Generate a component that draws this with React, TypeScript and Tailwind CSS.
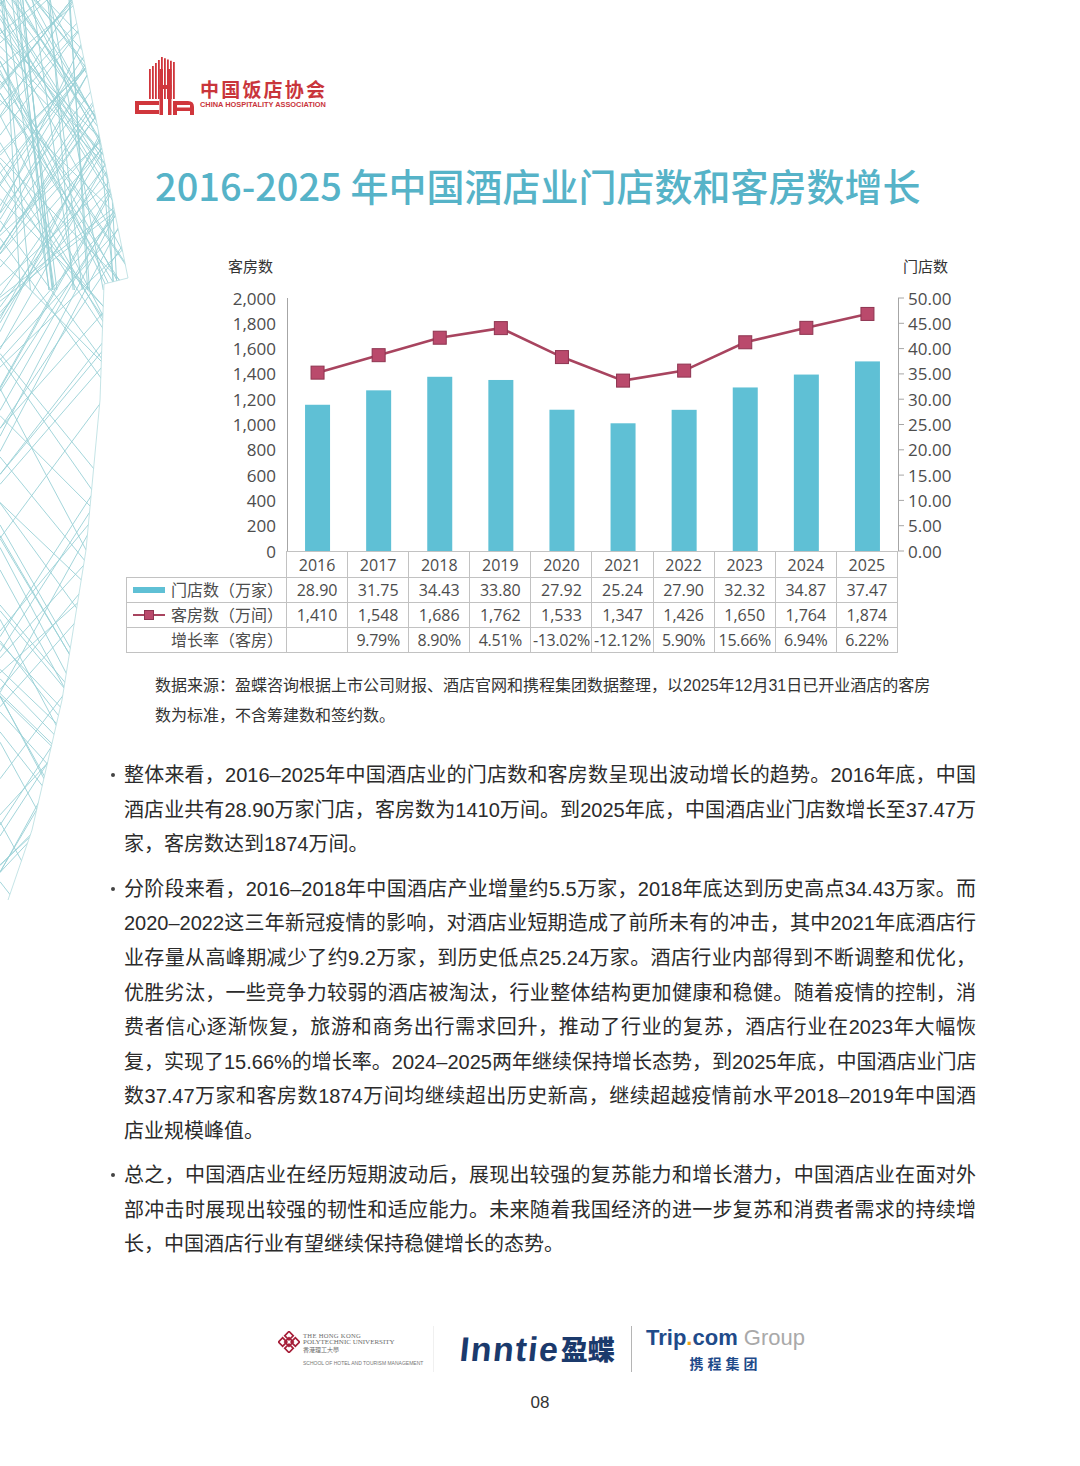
import React from "react";

const years = [2016, 2017, 2018, 2019, 2020, 2021, 2022, 2023, 2024, 2025];
const stores = [28.9, 31.75, 34.43, 33.8, 27.92, 25.24, 27.9, 32.32, 34.87, 37.47];
const rooms = [1410, 1548, 1686, 1762, 1533, 1347, 1426, 1650, 1764, 1874];
const growth = ["", "9.79%", "8.90%", "4.51%", "-13.02%", "-12.12%", "5.90%", "15.66%", "6.94%", "6.22%"];

const X0 = 287;
const COLW = 61.1;
const YB = 551;
const YT = 298;
const H = YB - YT;

function rng(seed: number) {
  let s = seed;
  return () => {
    s = (s * 16807) % 2147483647;
    return (s - 1) / 2147483646;
  };
}

const decoLines: number[][] = (() => {
  const r = rng(24681);
  const out: number[][] = [];
  for (let i = 0; i < 60; i++) {
    const y0 = -250 + r() * 1250;
    const s = 0.9 + r() * 1.0;
    out.push([0, y0, 140, y0 + 140 * s]);
  }
  for (let i = 0; i < 60; i++) {
    const y0 = -50 + r() * 1250;
    const s = -(0.9 + r() * 1.0);
    out.push([0, y0, 140, y0 + 140 * s]);
  }
  for (let i = 0; i < 30; i++) {
    const y0 = -250 + r() * 500;
    const s = 0.7 + r() * 1.4;
    out.push([0, y0, 140, y0 + 140 * s]);
  }
  for (let i = 0; i < 30; i++) {
    const y0 = 0 + r() * 500;
    const s = -(0.7 + r() * 1.4);
    out.push([0, y0, 140, y0 + 140 * s]);
  }
  for (let i = 0; i < 22; i++) {
    const x0 = r() * 110;
    const dx = 15 + r() * 40;
    out.push([x0, -10, x0 + dx, 290]);
  }
  return out;
})();

const envelope = "0,0 72,0 128,278 104,284 100,400 86,550 62,700 32,830 8,900 0,900";

function Deco() {
  return (
    <svg className="absolute left-0 top-0" width="140" height="900" viewBox="0 0 140 900">
      <defs>
        <clipPath id="envclip">
          <polygon points={envelope} />
        </clipPath>
      </defs>
      <g clipPath="url(#envclip)" stroke="#98d0d6" strokeWidth="0.9" fill="none">
        {decoLines.map((l, i) => (
          <line key={i} x1={l[0]} y1={l[1]} x2={l[2]} y2={l[3]} />
        ))}
      </g>
      <polyline points="72,0 128,278 104,284 100,400 86,550 62,700 32,830 8,900" stroke="#b6dde0" strokeWidth="0.8" fill="none" />
    </svg>
  );
}

function LogoMark() {
  const stripes = [0, 1, 2, 3, 4, 5, 6, 7, 8];
  const topAt = (x: number) => (x <= 28 ? 14 - ((x - 16) / 12) * 12 : 2 + ((x - 28) / 12) * 5);
  return (
    <svg width="66" height="60" viewBox="0 0 66 60">
      <g fill="#d0363c">
        {stripes.map((i) => {
          const x = 16 + i * 3;
          const t = topAt(x);
          return <rect key={i} x={x} y={t} width="1.8" height={44 - t} />;
        })}
        <rect x="26.5" y="14" width="3.5" height="46" />
        <rect x="35" y="14" width="3.5" height="46" />
        <rect x="26.5" y="30" width="12" height="4" />
        <path fillRule="evenodd" d="M2 46 L26 46 L26 50 L6 50 L6 55 L26 55 L26 59 L2 59 Z" />
        <path
          fillRule="evenodd"
          d="M40 60 L40 46 L55 46 Q61 46 61 52 L61 60 L57 60 L57 56 L44 56 L44 60 Z M44 50 L57 50 L57 52.5 L44 52.5 Z"
        />
      </g>
    </svg>
  );
}

function Chart() {
  const yl = (v: number) => YB - (v / 2000) * H;
  const yr = (v: number) => YB - (v / 50) * H;
  const cx = (i: number) => X0 + COLW * (i + 0.5);
  const pts = rooms.map((v, i) => `${cx(i)},${yl(v)}`).join(" ");
  return (
    <svg width="1080" height="296" viewBox="0 255 1080 296" className="block overflow-visible">
      <g fontFamily="'Noto Sans CJK SC', sans-serif" fontSize="15" fill="#333">
        <text x="228" y="272">客房数</text>
        <text x="903" y="272">门店数</text>
      </g>
      <g fontFamily="'Open Sans', sans-serif" fontSize="17" fill="#4d4d4d">
        {Array.from({ length: 11 }).map((_, i) => {
          const v = 2000 - i * 200;
          const y = YT + (H / 10) * i;
          return (
            <text key={"l" + i} x="276" y={y} textAnchor="end" dominantBaseline="central">
              {v.toLocaleString("en-US")}
            </text>
          );
        })}
        {Array.from({ length: 11 }).map((_, i) => {
          const v = 50 - i * 5;
          const y = YT + (H / 10) * i;
          return (
            <text key={"r" + i} x="908" y={y} dominantBaseline="central">
              {v.toFixed(2)}
            </text>
          );
        })}
      </g>
      <line x1="287.5" y1={YT} x2="287.5" y2={YB} stroke="#a6a6a6" strokeWidth="1" />
      <line x1="898.5" y1={YT} x2="898.5" y2={YB} stroke="#a6a6a6" strokeWidth="1" />
      {Array.from({ length: 11 }).map((_, i) => {
        const y = YT + (H / 10) * i;
        return <line key={"t" + i} x1="898" y1={y} x2="904" y2={y} stroke="#a6a6a6" strokeWidth="1" />;
      })}
      {stores.map((v, i) => (
        <rect key={"b" + i} x={cx(i) - 12.5} y={yr(v)} width="25" height={YB - yr(v)} fill="#5fc0d5" />
      ))}
      <polyline points={pts} fill="none" stroke="#a8445f" strokeWidth="2.6" />
      {rooms.map((v, i) => (
        <rect
          key={"m" + i}
          x={cx(i) - 6.5}
          y={yl(v) - 6.5}
          width="13"
          height="13"
          fill="#ba4a6c"
          stroke="#8e3450"
          strokeWidth="1"
        />
      ))}
    </svg>
  );
}

function DataTable() {
  return (
    <div className="ml-[126px] grid grid-cols-[161px_repeat(10,61.1px)] font-['Open_Sans','Noto_Sans_CJK_SC',sans-serif] text-[16px] text-[#4d4d4d]">
      <div className="h-[27px] border-r border-b border-[#c2c2c2]"></div>
      {years.map((y) => (
        <div key={y} className="h-[27px] flex items-center justify-center border-t border-r border-b border-[#c2c2c2]">
          {y}
        </div>
      ))}

      <div className="h-[25px] flex items-center border-l border-r border-b border-[#c2c2c2] pl-[6px] pr-[3px]">
        <div className="w-[32px] h-[6px] bg-[#5fc0d5]"></div>
        <div className="ml-auto text-[16px] leading-none">门店数（万家）</div>
      </div>
      {stores.map((v, i) => (
        <div key={"s" + i} className="h-[25px] flex items-center justify-center border-r border-b border-[#c2c2c2]">
          {v.toFixed(2)}
        </div>
      ))}

      <div className="h-[25px] flex items-center border-l border-r border-b border-[#c2c2c2] pl-[6px] pr-[3px]">
        <div className="relative w-[32px] h-[10px] flex items-center">
          <div className="w-full h-[2px] bg-[#a8445f]"></div>
          <div className="absolute left-[11px] top-0 w-[10px] h-[10px] bg-[#ba4a6c] border border-[#8e3450]"></div>
        </div>
        <div className="ml-auto text-[16px] leading-none">客房数（万间）</div>
      </div>
      {rooms.map((v, i) => (
        <div key={"r" + i} className="h-[25px] flex items-center justify-center border-r border-b border-[#c2c2c2]">
          {v.toLocaleString("en-US")}
        </div>
      ))}

      <div className="h-[25px] flex items-center justify-end border-l border-r border-b border-[#c2c2c2] pr-[3px]">
        <div className="text-[16px] leading-none">增长率（客房）</div>
      </div>
      {growth.map((v, i) => (
        <div key={"g" + i} className="h-[25px] flex items-center justify-center border-r border-b border-[#c2c2c2] whitespace-nowrap tracking-[-0.3px]">
          {v}
        </div>
      ))}
    </div>
  );
}

const paras: string[][] = [
  [
    "整体来看，2016–2025年中国酒店业的门店数和客房数呈现出波动增长的趋势。2016年底，中国",
    "酒店业共有28.90万家门店，客房数为1410万间。到2025年底，中国酒店业门店数增长至37.47万",
    "家，客房数达到1874万间。",
  ],
  [
    "分阶段来看，2016–2018年中国酒店产业增量约5.5万家，2018年底达到历史高点34.43万家。而",
    "2020–2022这三年新冠疫情的影响，对酒店业短期造成了前所未有的冲击，其中2021年底酒店行",
    "业存量从高峰期减少了约9.2万家，到历史低点25.24万家。酒店行业内部得到不断调整和优化，",
    "优胜劣汰，一些竞争力较弱的酒店被淘汰，行业整体结构更加健康和稳健。随着疫情的控制，消",
    "费者信心逐渐恢复，旅游和商务出行需求回升，推动了行业的复苏，酒店行业在2023年大幅恢",
    "复，实现了15.66%的增长率。2024–2025两年继续保持增长态势，到2025年底，中国酒店业门店",
    "数37.47万家和客房数1874万间均继续超出历史新高，继续超越疫情前水平2018–2019年中国酒",
    "店业规模峰值。",
  ],
  [
    "总之，中国酒店业在经历短期波动后，展现出较强的复苏能力和增长潜力，中国酒店业在面对外",
    "部冲击时展现出较强的韧性和适应能力。未来随着我国经济的进一步复苏和消费者需求的持续增",
    "长，中国酒店行业有望继续保持稳健增长的态势。",
  ],
];

function PolyUMark() {
  return (
    <svg width="22" height="22" viewBox="0 0 22 22">
      <g transform="rotate(45 11 11)" fill="none" stroke="#a61e38" strokeWidth="1.7">
        <rect x="3.5" y="3.5" width="6" height="6" />
        <rect x="12.5" y="3.5" width="6" height="6" />
        <rect x="3.5" y="12.5" width="6" height="6" />
        <rect x="12.5" y="12.5" width="6" height="6" />
        <rect x="8" y="8" width="6" height="6" />
      </g>
    </svg>
  );
}

export default function App() {
  return (
    <div className="relative w-[1080px] h-[1466px] bg-white overflow-hidden font-['Liberation_Sans','Noto_Sans_CJK_SC',sans-serif] [text-autospace:no-autospace]">
      <Deco />
      <div className="relative">
        {/* Logo */}
        <div className="pt-[55px] pl-[133px] flex items-start h-[116px]">
          <LogoMark />
          <div className="ml-[1px] pt-[23px] flex flex-col">
            <div className="font-['Noto_Sans_CJK_SC',sans-serif] text-[19px] leading-[21px] font-bold tracking-[2.2px] text-[#c9353b]">
              中国饭店协会
            </div>
            <div className="mt-[2px] text-[7.4px] leading-[8px] font-bold text-[#c9353b] whitespace-nowrap">
              CHINA HOSPITALITY ASSOCIATION
            </div>
          </div>
        </div>

        {/* Title */}
        <div className="mt-[44px] h-[50px] pl-[155px] font-['Noto_Sans_CJK_SC',sans-serif] text-[38px] leading-[50px] font-medium text-[#56b3c8] whitespace-nowrap">
          2016-2025 年中国酒店业门店数和客房数增长
        </div>

        {/* Chart */}
        <div className="mt-[45px]">
          <Chart />
        </div>
        <DataTable />

        {/* Note */}
        <div className="mt-[18px] pl-[155px] text-[16px] leading-[30px] text-[#333]">
          <div className="whitespace-nowrap">
            数据来源：盈蝶咨询根据上市公司财报、酒店官网和携程集团数据整理，以2025年12月31日已开业酒店的客房
          </div>
          <div className="whitespace-nowrap">数为标准，不含筹建数和签约数。</div>
        </div>

        {/* Body */}
        <div className="mt-[27px] pl-[110px] flex flex-col text-[20px] leading-[34.6px] text-[#2b2b2b]">
          {paras.map((lines, pi) => (
            <div key={pi} className={pi === 0 ? "flex" : pi === 1 ? "flex mt-[10px]" : "flex mt-[9.5px]"}>
              <div className="w-[14px] shrink-0 h-[34.6px] flex items-center">
                <div className="w-[4px] h-[4px] rounded-full bg-[#444] ml-[1px]"></div>
              </div>
              <div className="w-[852px]">
                {lines.map((ln, li) => (
                  <div
                    key={li}
                    className={
                      li < lines.length - 1
                        ? "whitespace-nowrap text-justify [text-align-last:justify]"
                        : "whitespace-nowrap"
                    }
                  >
                    {ln}
                  </div>
                ))}
              </div>
            </div>
          ))}
        </div>

        {/* Footer logos */}
        <div className="mt-[63px] h-[48px] pl-[278px] flex items-center">
          <div className="w-[150px] shrink-0 flex flex-col">
            <div className="flex items-start">
              <PolyUMark />
              <div className="ml-[3px] mt-[1px] flex flex-col font-['Liberation_Serif',serif] text-[#6b6b6b]">
                <div className="text-[6.6px] leading-[7px] tracking-[0.3px]">THE HONG KONG</div>
                <div className="text-[7px] leading-[7px]">POLYTECHNIC UNIVERSITY</div>
                <div className="text-[6px] leading-[7px] font-['Noto_Sans_CJK_TC',sans-serif]">香港理工大學</div>
              </div>
            </div>
            <div className="ml-[25px] mt-[7px] text-[5px] leading-[6px] text-[#777] whitespace-nowrap">
              SCHOOL OF HOTEL AND TOURISM MANAGEMENT
            </div>
          </div>
          <div className="ml-[5px] w-px h-[46px] bg-[#f0f0f0]"></div>
          <div className="ml-[26px] w-[158px] shrink-0 flex items-center text-[#1b3a6c]">
            <span className="text-[34px] leading-none font-bold tracking-[1.5px] [transform:skewX(-6deg)]">Inntie</span>
            <span className="ml-[1px] text-[27px] leading-none font-black font-['Noto_Sans_CJK_SC',sans-serif]">盈蝶</span>
          </div>
          <div className="ml-[13px] w-px h-[46px] bg-[#b5b5b5]"></div>
          <div className="ml-[14px] flex flex-col items-center">
            <div className="text-[22px] leading-[24px] whitespace-nowrap">
              <span className="font-bold text-[#1f4b8a]">Trip</span>
              <span className="font-bold text-[#f2a71b]">.</span>
              <span className="font-bold text-[#1f4b8a]">com</span>
              <span className="text-[#a9a9a9]"> Group</span>
            </div>
            <div className="mt-[6px] text-[14px] leading-[15px] font-bold tracking-[4px] text-[#1f4b8a] font-['Noto_Sans_CJK_SC',sans-serif]">
              携程集团
            </div>
          </div>
        </div>

        {/* Page number */}
        <div className="mt-[20px] flex justify-center text-[17px] leading-[20px] text-[#333]">08</div>
      </div>
    </div>
  );
}
